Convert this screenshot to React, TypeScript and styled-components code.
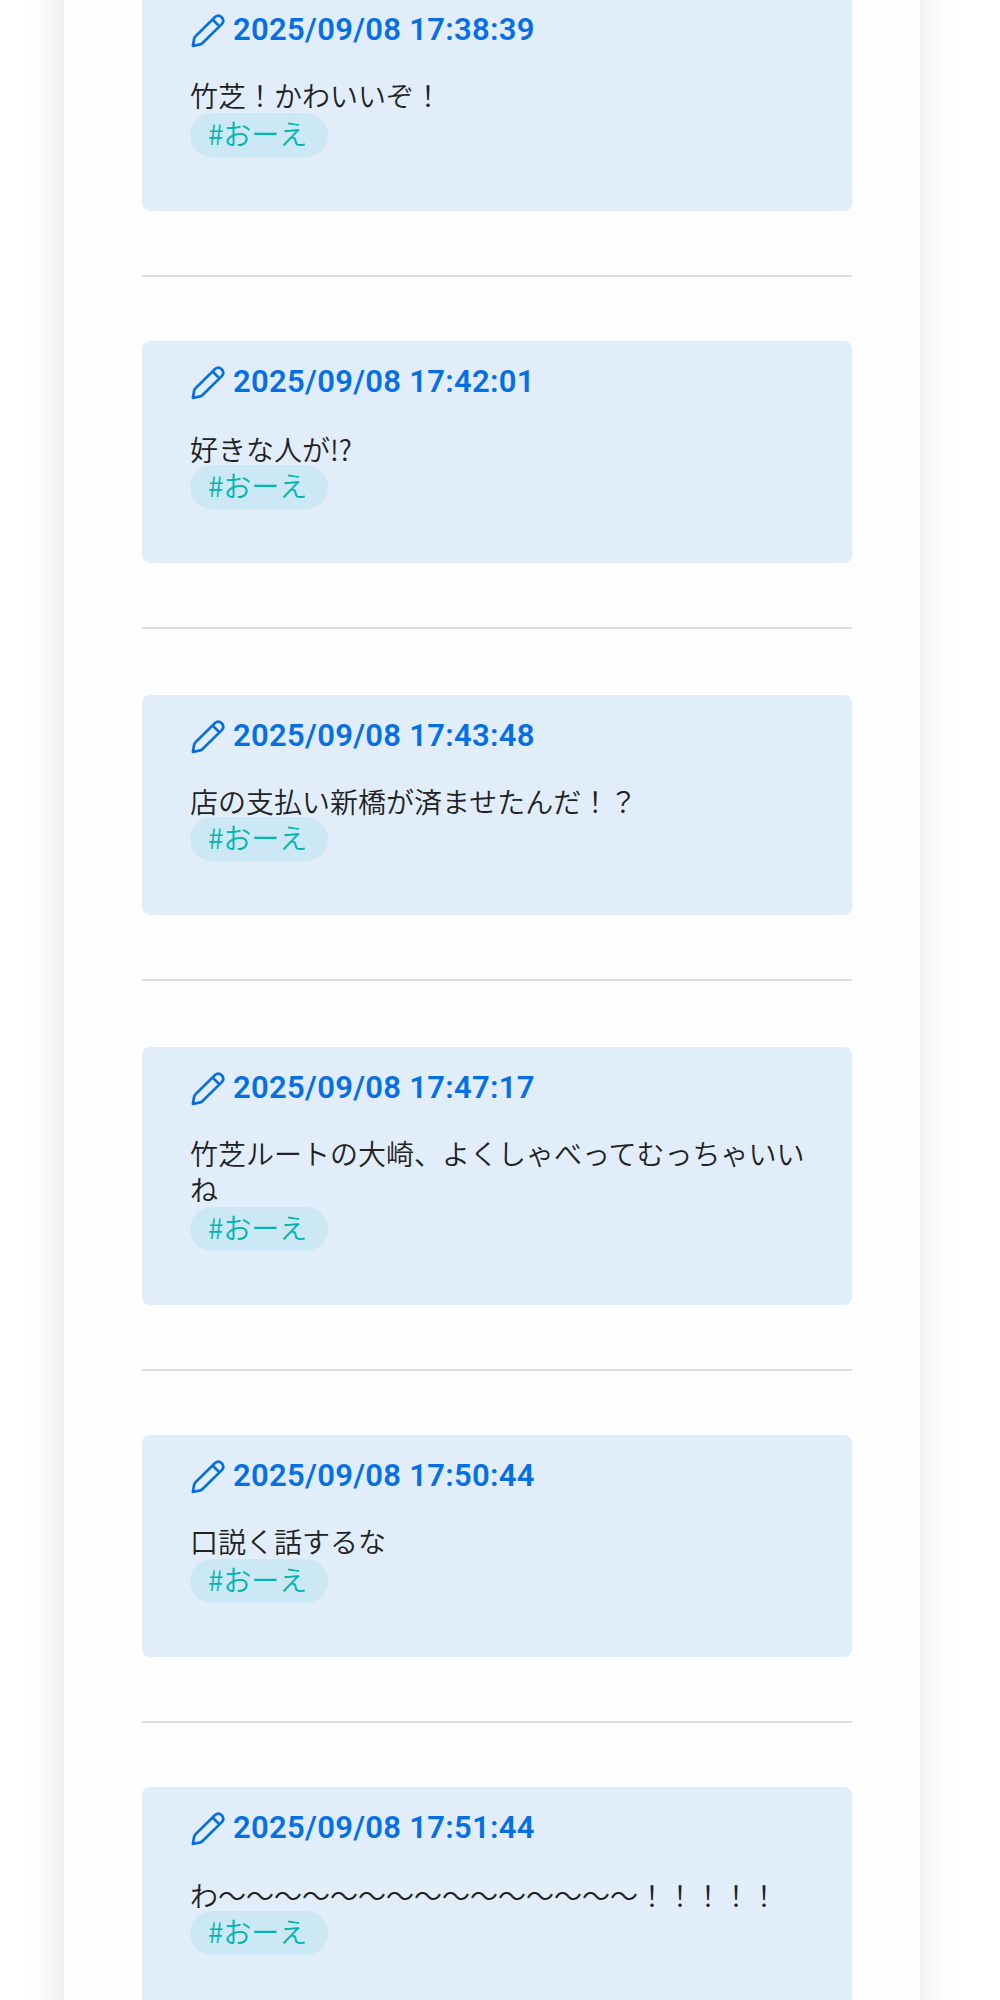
import React from "react";
import styled, { createGlobalStyle } from "styled-components";

const GlobalStyle = createGlobalStyle`
  * { box-sizing: border-box; }
  html { background: #fff; }
  body { margin: 0; height: 2000px; overflow: hidden; }
`;

const Page = styled.div`
  height: 2000px;
  overflow: hidden;
  display: flex;
  padding-left: 64px;
  background: #fff;
  font-family: "Noto Sans CJK JP", sans-serif;
  font-weight: 350;
`;

const Sheet = styled.main`
  flex: none;
  width: 856px;
  height: 2200px;
  margin-top: -100px;
  padding: 89px 68px 0 78px;
  background: #fdfdfd;
  box-shadow: -3px 0 40px rgba(0, 0, 0, 0.11);
`;

const Timeline = styled.div`
  display: flex;
  flex-direction: column;
`;

const Card = styled.article<{ $height: number }>`
  display: flex;
  flex-direction: column;
  align-items: flex-start;
  flex: none;
  height: ${(p) => p.$height}px;
  padding: 20px 44px 0 48px;
  border-radius: 8px;
  background: #e1eefa;
`;

const Heading = styled.h2`
  display: flex;
  align-items: center;
  height: 40px;
  margin: 0;
  color: #066fe4;
`;

const PenIcon = styled.svg`
  width: 36px;
  height: 36px;
  margin-top: 4px;
  flex: none;
`;

const Stamp = styled.time`
  margin-left: 7px;
  padding-top: 1px;
  font: 560 31px/40px Roboto, "Liberation Sans", sans-serif;
  letter-spacing: 0.3px;
  white-space: nowrap;
`;

const Body = styled.p<{ $shift: number }>`
  width: 618px;
  margin: ${(p) => 28 + p.$shift}px 0 0;
  font-size: 28px;
  line-height: 36px;
  color: #222;
`;

const Tag = styled.span<{ $gap: number }>`
  display: flex;
  align-items: center;
  width: 138px;
  height: 44px;
  margin-top: ${(p) => p.$gap}px;
  padding: 0 0 4px 18px;
  border-radius: 22px;
  background: #cce8f4;
  color: #00b5ad;
  font-size: 28px;
  line-height: 40px;
  white-space: nowrap;
`;

const Divider = styled.hr<{ $after: number }>`
  flex: none;
  width: 100%;
  height: 2px;
  margin: 64px 0 ${(p) => p.$after}px;
  border: 0;
  background: #dedede;
`;

interface Entry {
  stamp: string;
  text: string;
  height: number;
  shift: number;
  gap: number;
  after: number;
}

const entries: Entry[] = [
  { stamp: "2025/09/08 17:38:39", text: "竹芝！かわいいぞ！", height: 222, shift: 0, gap: 0, after: 64 },
  { stamp: "2025/09/08 17:42:01", text: "好きな人が!?", height: 222, shift: 2, gap: -2, after: 66 },
  { stamp: "2025/09/08 17:43:48", text: "店の支払い新橋が済ませたんだ！？", height: 220, shift: 0, gap: -2, after: 66 },
  { stamp: "2025/09/08 17:47:17", text: "竹芝ルートの大崎、よくしゃべってむっちゃいいね", height: 258, shift: 0, gap: 0, after: 64 },
  { stamp: "2025/09/08 17:50:44", text: "口説く話するな", height: 222, shift: 0, gap: 0, after: 64 },
  { stamp: "2025/09/08 17:51:44", text: "わ～～～～～～～～～～～～～～～！！！！！", height: 222, shift: 2, gap: -2, after: 64 },
];

function Pen() {
  return (
    <PenIcon viewBox="0 0 36 36" fill="none" stroke="currentColor" strokeWidth="2.7" strokeLinejoin="round" strokeLinecap="round">
      <path d="M2.9 33L4.2 25.5Q4.5 24.3 5.4 23.4L24.8 4.3Q28.3 1.1 31.7 4.3Q34.9 7.7 31.8 11.1L12.3 30.2Q11.4 31.1 10.2 31.4Z" />
      <path d="M22.8 6.8L29.2 13.1" />
    </PenIcon>
  );
}

export default function App() {
  return (
    <Page>
      <GlobalStyle />
      <Sheet>
        <Timeline>
          {entries.map((e, i) => (
            <React.Fragment key={e.stamp}>
              <Card $height={e.height}>
                <Heading>
                  <Pen />
                  <Stamp>{e.stamp}</Stamp>
                </Heading>
                <Body $shift={e.shift}>{e.text}</Body>
                <Tag $gap={e.gap}>#おーえ</Tag>
              </Card>
              {i < entries.length - 1 && <Divider $after={e.after} />}
            </React.Fragment>
          ))}
        </Timeline>
      </Sheet>
    </Page>
  );
}
